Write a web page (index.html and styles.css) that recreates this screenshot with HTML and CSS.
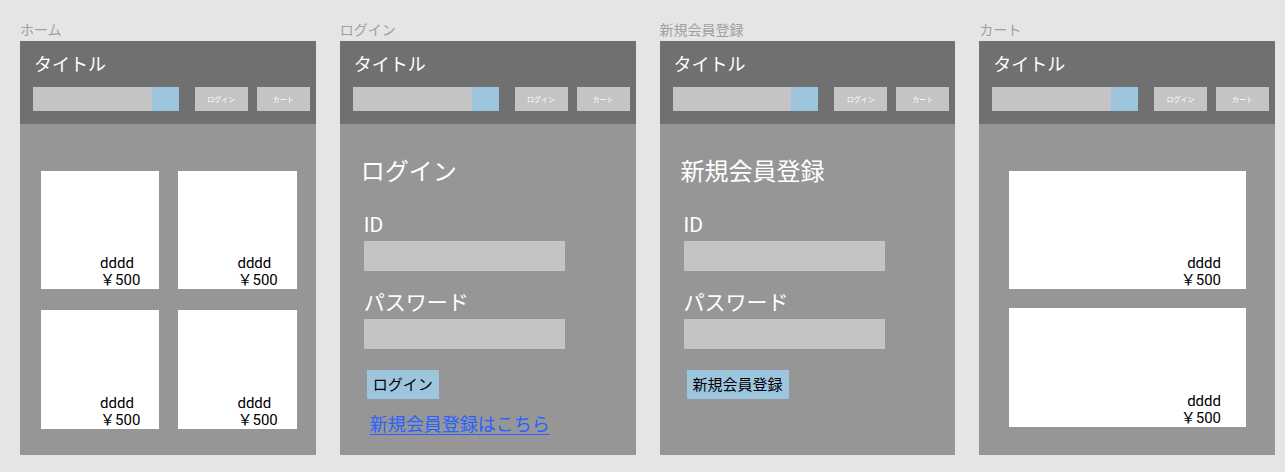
FILE: index.html
```html
<!DOCTYPE html>
<html lang="ja">
<head>
<meta charset="utf-8">
<meta name="viewport" content="width=device-width, initial-scale=1">
<title>ワイヤーフレーム</title>
<link rel="stylesheet" href="styles.css">
</head>
<body>
<main class="board">
  <section class="frame">
    <h2 class="frame-name">ホーム</h2>
    <div class="screen">
      <header class="header">
        <p class="site-title">タイトル</p>
        <div class="toolbar">
          <form class="search">
            <input class="search-input" type="search" aria-label="検索">
            <button class="search-button" type="button" aria-label="検索する"></button>
          </form>
          <button class="nav-button" type="button">ログイン</button>
          <button class="nav-button" type="button">カート</button>
        </div>
      </header>
      <div class="products">
        <article class="card"><p class="card-text">dddd<br>&#xFFE5;500</p></article>
        <article class="card"><p class="card-text">dddd<br>&#xFFE5;500</p></article>
        <article class="card"><p class="card-text">dddd<br>&#xFFE5;500</p></article>
        <article class="card"><p class="card-text">dddd<br>&#xFFE5;500</p></article>
      </div>
    </div>
  </section>

  <section class="frame">
    <h2 class="frame-name">ログイン</h2>
    <div class="screen">
      <header class="header">
        <p class="site-title">タイトル</p>
        <div class="toolbar">
          <form class="search">
            <input class="search-input" type="search" aria-label="検索">
            <button class="search-button" type="button" aria-label="検索する"></button>
          </form>
          <button class="nav-button" type="button">ログイン</button>
          <button class="nav-button" type="button">カート</button>
        </div>
      </header>
      <div class="panel">
        <h1 class="panel-title">ログイン</h1>
        <form class="form">
          <div class="field">
            <label class="label" for="login-id">ID</label>
            <input class="input" id="login-id" type="text">
          </div>
          <div class="field">
            <label class="label" for="login-password">パスワード</label>
            <input class="input" id="login-password" type="password">
          </div>
          <div class="actions">
            <button class="submit" type="button">ログイン</button>
            <a class="register-link" href="#register">新規会員登録はこちら</a>
          </div>
        </form>
      </div>
    </div>
  </section>

  <section class="frame" id="register">
    <h2 class="frame-name">新規会員登録</h2>
    <div class="screen">
      <header class="header">
        <p class="site-title">タイトル</p>
        <div class="toolbar">
          <form class="search">
            <input class="search-input" type="search" aria-label="検索">
            <button class="search-button" type="button" aria-label="検索する"></button>
          </form>
          <button class="nav-button" type="button">ログイン</button>
          <button class="nav-button" type="button">カート</button>
        </div>
      </header>
      <div class="panel">
        <h1 class="panel-title">新規会員登録</h1>
        <form class="form">
          <div class="field">
            <label class="label" for="register-id">ID</label>
            <input class="input" id="register-id" type="text">
          </div>
          <div class="field">
            <label class="label" for="register-password">パスワード</label>
            <input class="input" id="register-password" type="password">
          </div>
          <div class="actions">
            <button class="submit" type="button">新規会員登録</button>
          </div>
        </form>
      </div>
    </div>
  </section>

  <section class="frame">
    <h2 class="frame-name">カート</h2>
    <div class="screen">
      <header class="header">
        <p class="site-title">タイトル</p>
        <div class="toolbar">
          <form class="search">
            <input class="search-input" type="search" aria-label="検索">
            <button class="search-button" type="button" aria-label="検索する"></button>
          </form>
          <button class="nav-button" type="button">ログイン</button>
          <button class="nav-button" type="button">カート</button>
        </div>
      </header>
      <div class="cart">
        <article class="card card-wide"><p class="card-text">dddd<br>&#xFFE5;500</p></article>
        <article class="card card-wide"><p class="card-text">dddd<br>&#xFFE5;500</p></article>
      </div>
    </div>
  </section>
</main>
</body>
</html>
```
FILE: styles.css
```css
* {
  box-sizing: border-box;
}

body {
  margin: 0;
  background: #e5e5e5;
  color: #000;
  font-family: Roboto, "Noto Sans CJK JP", sans-serif;
}

h1, h2, p {
  margin: 0;
  font-weight: 400;
}

input, button {
  margin: 0;
  padding: 0;
  border: 0;
  border-radius: 0;
  font-family: inherit;
}

.board {
  display: grid;
  grid-template-columns: repeat(4, minmax(0, 1fr));
  gap: 24px;
  padding: 20px 10px 16px 20px;
}

.frame {
  display: flex;
  flex-direction: column;
}

.frame-name {
  color: #a0a0a0;
  font-size: 14px;
  line-height: 21px;
}

.screen {
  flex: 1;
  background: #969696;
}

.header {
  display: flex;
  flex-direction: column;
  gap: 10px;
  padding: 12px 6px 13px 13px;
  background: #707070;
}

.site-title {
  padding-left: 1px;
  color: #fff;
  font-size: 18px;
  line-height: 24px;
}

.toolbar {
  display: flex;
  gap: 9px;
}

.search {
  display: flex;
  flex: 1;
  min-width: 0;
  height: 24px;
  margin-right: 7px;
}

.search-input {
  flex: 1;
  min-width: 0;
  background: #c4c4c4;
}

.search-button {
  width: 27px;
  background: #9ec5de;
}

.nav-button {
  width: 53px;
  padding-bottom: 1px;
  background: #c4c4c4;
  color: #fff;
  font-size: 7px;
}

.products {
  display: grid;
  grid-template-columns: repeat(2, minmax(0, 1fr));
  gap: 21px 19px;
  padding: 47px 19px 25px 21px;
}

.cart {
  display: grid;
  gap: 19px;
  padding: 47px 29px 27px 30px;
}

.card {
  display: flex;
  justify-content: flex-end;
  align-items: flex-end;
  aspect-ratio: 1;
  padding-right: 19px;
  background: #fff;
}

.card-wide {
  aspect-ratio: 2;
  padding-right: 25px;
  text-align: right;
}

.card-text {
  font-size: 15px;
  line-height: 17px;
}

.panel {
  padding: 30px 21px 18px;
}

.panel-title {
  color: #fff;
  font-size: 24px;
  line-height: 36px;
}

.form {
  display: flex;
  flex-direction: column;
  gap: 20px;
  padding: 23px 0 0 3px;
}

.field {
  display: flex;
  flex-direction: column;
  gap: 4px;
}

.label {
  color: #fff;
  font-size: 21px;
  line-height: 24px;
}

.input {
  width: 100%;
  max-width: 201px;
  height: 30px;
  background: #c4c4c4;
}

.actions {
  display: flex;
  flex-direction: column;
  align-items: flex-start;
  gap: 14px;
  padding: 1px 0 0 3px;
}

.submit {
  height: 29px;
  padding: 0 6px 3px;
  background: #9ec5de;
  color: #000;
  font-size: 15px;
}

.register-link {
  padding-left: 3px;
  color: #2962ff;
  font-size: 18px;
  line-height: 24px;
  text-decoration-skip-ink: none;
  text-underline-offset: 3px;
}
```
